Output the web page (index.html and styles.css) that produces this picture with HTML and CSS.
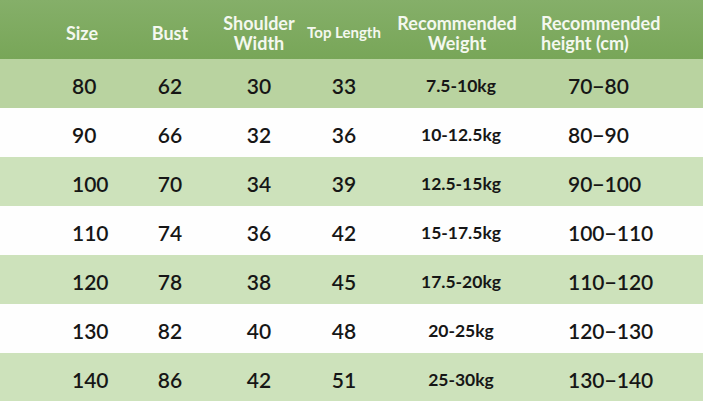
FILE: index.html
```html
<!DOCTYPE html>
<html>
<head>
<meta charset="utf-8">
<link rel="stylesheet" href="styles.css">
</head>
<body>
<div class="table">
  <div class="row head">
    <div class="c c1">Size</div>
    <div class="c">Bust</div>
    <div class="c two">Shoulder<br>Width</div>
    <div class="c small">Top Length</div>
    <div class="c two hw">Recommended<br>Weight</div>
    <div class="c two c6">Recommended<br>height (cm)</div>
  </div>
  <div class="row g1">
    <div class="c c1">80</div><div class="c">62</div><div class="c">30</div><div class="c">33</div><div class="c w">7.5-10kg</div><div class="c c6">70−80</div>
  </div>
  <div class="row">
    <div class="c c1">90</div><div class="c">66</div><div class="c">32</div><div class="c">36</div><div class="c w">10-12.5kg</div><div class="c c6">80−90</div>
  </div>
  <div class="row g">
    <div class="c c1">100</div><div class="c">70</div><div class="c">34</div><div class="c">39</div><div class="c w">12.5-15kg</div><div class="c c6">90−100</div>
  </div>
  <div class="row">
    <div class="c c1">110</div><div class="c">74</div><div class="c">36</div><div class="c">42</div><div class="c w">15-17.5kg</div><div class="c c6">100−110</div>
  </div>
  <div class="row g">
    <div class="c c1">120</div><div class="c">78</div><div class="c">38</div><div class="c">45</div><div class="c w">17.5-20kg</div><div class="c c6">110−120</div>
  </div>
  <div class="row">
    <div class="c c1">130</div><div class="c">82</div><div class="c">40</div><div class="c">48</div><div class="c w">20-25kg</div><div class="c c6">120−130</div>
  </div>
  <div class="row g">
    <div class="c c1">140</div><div class="c">86</div><div class="c">42</div><div class="c">51</div><div class="c w">25-30kg</div><div class="c c6">130−140</div>
  </div>
</div>
</body>
</html>
```
FILE: styles.css
```css
html, body { margin: 0; padding: 0; }
body {
  width: 703px;
  height: 401px;
  overflow: hidden;
  background: #fff;
  font-family: Lato, "Open Sans", sans-serif;
}
.table { display: flex; flex-direction: column; }
.row {
  box-sizing: border-box;
  display: grid;
  grid-template-columns: 84px 92px 86px 84px 150px 167px;
  padding-left: 40px;
  padding-top: 3px;
  height: 49px;
  align-items: center;
  color: #161616;
  font-size: 21px;
  font-weight: 600;
  background: #fefefe;
}
.row.head {
  height: 59px;
  padding-top: 6px;
  background: linear-gradient(#85af69, #78a658);
  color: #f4f8ef;
  font-size: 18px;
  font-weight: 700;
  line-height: 20px;
}
.row.g1 { background: #b9d3a0; }
.row.g { background: #cde2bb; }
.c { text-align: center; white-space: nowrap; }
.row .c1 { text-align: left; padding-left: 32px; }
.row.head .c1 { text-align: center; padding-left: 0; }
.c6 { text-align: left; padding-left: 32px; }
.row.head .c6 { padding-left: 5px; }
.row.head .small { font-size: 15px; margin-top: -2px; }
.row.head .hw { padding-right: 8px; }
.w { font-size: 17.5px; font-weight: 700; }
```
